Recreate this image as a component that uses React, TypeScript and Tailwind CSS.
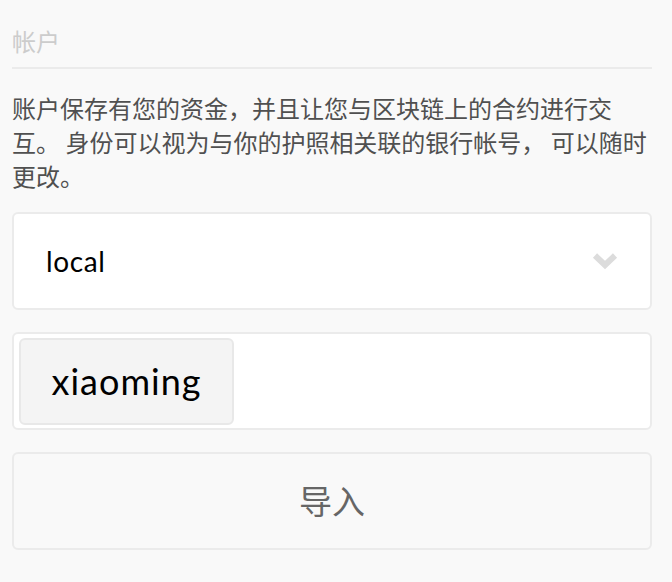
export default function App() {
  return (
    <div
      className="min-h-[582px] bg-[#f9f9f9] pl-3 pr-5 pt-[24px]"
      style={{ fontFamily: '"Noto Sans CJK SC", "Noto Sans", sans-serif' }}
    >
      <h2 className="text-[24px] leading-[33px] text-[#cccccc]">帐户</h2>
      <div className="mt-[10px] h-[2px] bg-[#ebebeb]" />

      <p className="mt-[22px] text-[24px] leading-[34px] text-[#505050]">
        账户保存有您的资金，并且让您与区块链上的合约进行交互。 身份可以视为与你的护照相关联的银行帐号， 可以随时更改。
      </p>

      <div className="mt-[19px] flex flex-col gap-[22px]">
        <div className="flex h-[98px] items-center justify-between rounded-md border-2 border-[#ebebeb] bg-white pl-8 pr-[32px]">
          <span
            className="text-[28px] tracking-[0.6px] text-black"
            style={{ fontFamily: "Lato, sans-serif" }}
          >
            local
          </span>
          <svg width="26" height="18" viewBox="0 0 26 18">
            <path
              d="M3 3.5 L13 13 L23 3.5"
              fill="none"
              stroke="#dcdcdc"
              strokeWidth="6"
              strokeLinecap="butt"
              strokeLinejoin="miter"
            />
          </svg>
        </div>

        <div className="flex h-[98px] items-center rounded-md border-2 border-[#ebebeb] bg-white px-[5px]">
          <div className="flex h-[87px] w-[215px] items-center justify-center rounded-md border-2 border-[#e8e8e8] bg-[#f4f4f4]">
            <span
              className="text-[36px] tracking-[1px] text-black"
              style={{ fontFamily: "Lato, sans-serif" }}
            >
              xiaoming
            </span>
          </div>
        </div>

        <button className="flex h-[98px] items-center justify-center rounded-md border-2 border-[#ebebeb] bg-[#f9f9f9] text-[33px] text-[#666666]">
          导入
        </button>
      </div>
    </div>
  )
}
